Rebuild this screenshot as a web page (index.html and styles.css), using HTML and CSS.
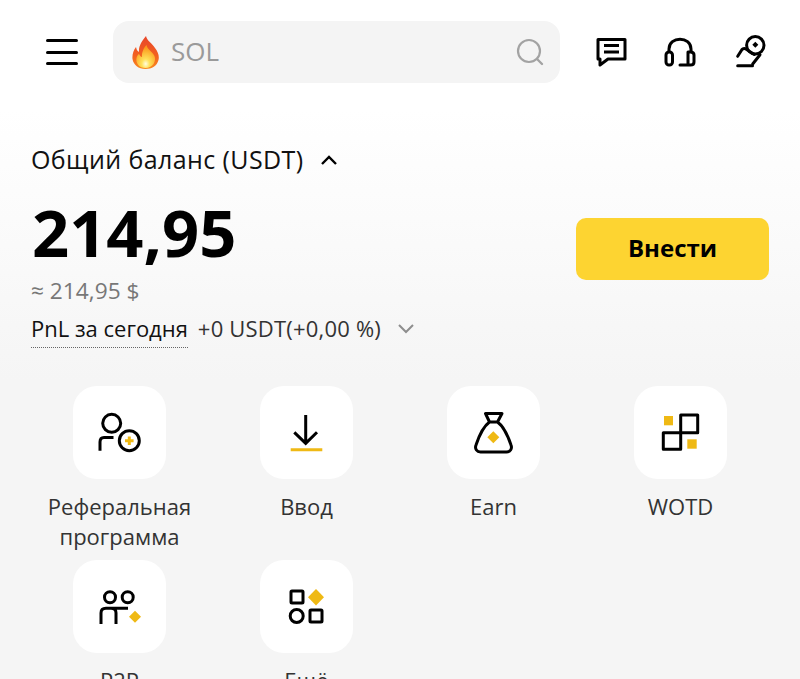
FILE: index.html
```html
<!DOCTYPE html>
<html lang="en">
<head>
    <meta charset="UTF-8">
    <meta name="viewport" content="width=device-width, initial-scale=1.0">
    <title>Balance</title>
    <link rel="stylesheet" href="styles.css">
</head>
<body>
    <header class="top-bar">
        <button class="menu-button" aria-label="Menu">
            <span></span><span></span><span></span>
        </button>
        <div class="search-box">
            <svg class="flame" viewBox="0 0 27 33" width="27" height="33">
                <defs>
                    <linearGradient id="flame-outer" x1="0" y1="0" x2="0" y2="1">
                        <stop offset="0" stop-color="#e8452a"/>
                        <stop offset="0.6" stop-color="#f2611f"/>
                        <stop offset="1" stop-color="#f98a1e"/>
                    </linearGradient>
                    <radialGradient id="flame-inner" cx="0.5" cy="0.82" r="0.7">
                        <stop offset="0" stop-color="#fffde0"/>
                        <stop offset="0.3" stop-color="#ffe15a"/>
                        <stop offset="1" stop-color="#fb9a1c"/>
                    </radialGradient>
                </defs>
                <path fill="url(#flame-outer)" d="M14 0 C15 5 20 7 23 12 C26 16 27.500 20 26.500 24 C25 30 20 33 13.500 33 C6.500 33 1.500 29 .5 23 C0 19 1.500 14 4 11 C4.500 13 5 15 7 16 C6.500 10 10 5 14 0Z"/>
                <path fill="url(#flame-inner)" d="M14.500 9 C15 13 20 15 22.500 20 C24.500 25 21 32 13.500 32 C7 32 3.500 27 4.500 22 C5 20 6 18.500 7 18 C8 20 9 21 10 21 C9.500 17 11.500 12 14.500 9Z"/>
            </svg>
            <span class="search-text">SOL</span>
            <svg class="search-icon" viewBox="0 0 28 28" width="28" height="28">
                <circle cx="13" cy="13" r="11" fill="none" stroke="#a3a3a3" stroke-width="2.200"/>
                <path d="M21 21 L26 26" fill="none" stroke="#a3a3a3" stroke-width="2.400" stroke-linecap="round"/>
            </svg>
        </div>
        <div class="top-icons">
            <svg class="top-icon" viewBox="0 0 32 32" width="32" height="32">
                <path d="M3 3.500 H30 V23 H13 L5 29 V23 H3Z" class="line" stroke-linejoin="round"/>
                <path d="M9 9.500 H24 M9 16 H24" class="line"/>
            </svg>
            <svg class="top-icon" viewBox="0 0 34 32" width="34" height="32">
                <path d="M6 16 V13 C6 0 28 0 28 13 V16" class="line"/>
                <rect x="3" y="16" width="6.500" height="13" rx="3" class="line"/>
                <path d="M25 16 H27.500 Q31 16 31 19 V26 Q31 29 27.500 29 H17 M25 16 V29" class="line" stroke-linecap="round"/>
            </svg>
            <svg class="top-icon" viewBox="0 0 36 36" width="36" height="36">
                <circle cx="22.300" cy="11.300" r="8.700" class="line"/>
                <path d="M4.700 22.300 L9 15.500 Q10 14.200 12.500 14.700 L21.300 20.500" class="line" stroke-linecap="round" stroke-linejoin="round"/>
                <path d="M27 20.700 L19.700 30" class="line" stroke-linecap="round"/>
                <path d="M4.700 31.700 H19.500" class="line" stroke-linecap="round"/>
                <path d="M22.300 7.700 L25.300 10.700 L22.300 13.700 L19.300 10.700Z" fill="#000"/>
            </svg>
        </div>
    </header>

    <main>
        <section class="balance">
            <div class="balance-title">
                <span>Общий баланс (USDT)</span>
                <svg viewBox="0 0 18 12" width="18" height="12">
                    <path d="M2 10 L9 3 L16 10" fill="none" stroke="#000" stroke-width="2.400"/>
                </svg>
            </div>
            <div class="balance-row">
                <div>
                    <div class="amount">214,95</div>
                    <div class="amount-usd">≈ 214,95 $</div>
                </div>
                <button class="deposit-button">Внести</button>
            </div>
            <div class="pnl">
                <span class="pnl-label">PnL за сегодня</span>
                <span class="pnl-value">+0 USDT(+0,00 %)</span>
                <svg viewBox="0 0 18 12" width="18" height="12">
                    <path d="M2 2 L9 9 L16 2" fill="none" stroke="#8e8e8e" stroke-width="2"/>
                </svg>
            </div>
        </section>

        <section class="shortcuts">
            <div class="shortcut">
                <div class="tile">
                    <svg viewBox="0 0 93 93">
                        <circle cx="38.700" cy="37.300" r="9" class="line"/>
                        <path d="M27 64.700 V56 Q27 51.500 31 51.500 H40.500" class="line"/>
                        <circle cx="56.300" cy="54.700" r="10" class="line"/>
                        <path d="M52 54.700 H60.600 M56.300 50.400 V59" class="accent-line"/>
                    </svg>
                </div>
                <div class="shortcut-label">Реферальная программа</div>
            </div>
            <div class="shortcut">
                <div class="tile">
                    <svg viewBox="0 0 93 93">
                        <path d="M45.700 29 V57 M34.300 46.300 L45.700 57.300 L57 46.300" class="line"/>
                        <path d="M30.700 63.700 H62.300" class="accent-line"/>
                    </svg>
                </div>
                <div class="shortcut-label">Ввод</div>
            </div>
            <div class="shortcut">
                <div class="tile">
                    <svg viewBox="0 0 93 93">
                        <path d="M38.500 27.500 H55 L50.500 36 C56 40 61 50 64 59 C65.500 63 63 66 59.500 66 H33.500 C30 66 27.500 63 29 59 C32 50 37 40 42.500 36Z M42.500 36 H50.500" class="line" stroke-linejoin="round"/>
                        <path d="M46.300 45.300 L52.300 51.300 L46.300 57.300 L40.300 51.300Z" class="accent"/>
                    </svg>
                </div>
                <div class="shortcut-label">Earn</div>
            </div>
            <div class="shortcut">
                <div class="tile">
                    <svg viewBox="0 0 93 93">
                        <path d="M46.700 46.700 V29 H63.700 V46.700Z M29.300 46.700 H46.700 V63.300 H29.300Z" class="line" stroke-linejoin="round"/>
                        <rect x="30" y="30" width="9" height="9.300" class="accent"/>
                        <rect x="53.300" y="53.300" width="9.400" height="9.400" class="accent"/>
                    </svg>
                </div>
                <div class="shortcut-label">WOTD</div>
            </div>
            <div class="shortcut">
                <div class="tile">
                    <svg viewBox="0 0 93 93">
                        <circle cx="37" cy="37.300" r="5.500" class="line"/>
                        <circle cx="54.700" cy="37.300" r="5.500" class="line"/>
                        <path d="M28 64 V53 Q28 48.300 33 48.300 H55 M43 64 V53 Q43 48.300 38 48.300" class="line"/>
                        <path d="M62 50.700 L68 56.700 L62 62.700 L56 56.700Z" class="accent"/>
                    </svg>
                </div>
                <div class="shortcut-label">P2P</div>
            </div>
            <div class="shortcut">
                <div class="tile">
                    <svg viewBox="0 0 93 93">
                        <rect x="31" y="31" width="12" height="12" rx="1" class="line"/>
                        <path d="M56 29 L64 37.300 L56 45.600 L48 37.300Z" class="accent"/>
                        <circle cx="36.700" cy="56" r="6.500" class="line"/>
                        <rect x="50" y="50" width="12" height="12" rx="1" class="line"/>
                    </svg>
                </div>
                <div class="shortcut-label">Ещё</div>
            </div>
        </section>
    </main>
</body>
</html>
```

FILE: styles.css
```css
/* General Styles */
html,
body {
    height: 679px;
}

body {
    margin: 0;
    overflow: hidden;
    font-family: 'Open Sans', sans-serif;
    color: #111111;
    background: linear-gradient(#ffffff 110px, #f5f5f5 380px);
}

.line {
    fill: none;
    stroke: #000000;
    stroke-width: 3;
}

.accent {
    fill: #efb914;
}

.accent-line {
    fill: none;
    stroke: #efb914;
    stroke-width: 3;
}

/* Top Bar */
.top-bar {
    display: flex;
    align-items: center;
    padding: 21px 0 0 46px;
}

.menu-button {
    display: flex;
    flex-direction: column;
    gap: 8.500px;
    width: 32px;
    padding: 0;
    margin-right: 35px;
    border: none;
    background: none;
}

.menu-button span {
    display: block;
    height: 3px;
    border-radius: 2px;
    background-color: #000000;
}

.search-box {
    display: flex;
    flex-shrink: 0;
    align-items: center;
    width: 447px;
    height: 62px;
    padding: 0 16px 0 19px;
    box-sizing: border-box;
    border-radius: 16px;
    background-color: #f4f4f4;
}

.search-text {
    flex: 1;
    margin-left: 12px;
    padding-bottom: 2px;
    font-size: 26px;
    color: #9a9a9a;
}

.top-icons {
    display: flex;
    align-items: center;
    gap: 36px;
    margin-left: 35px;
}

/* Balance */
.balance {
    padding: 62px 31px 0;
}

.balance-title {
    display: flex;
    align-items: center;
    gap: 17px;
    height: 30px;
    font-size: 25px;
    letter-spacing: 0.4px;
}

.balance-title span {
    padding-bottom: 2px;
}

.balance-row {
    display: flex;
    justify-content: space-between;
    align-items: flex-start;
    margin-top: 22px;
}

.amount {
    margin-left: 1px;
    font-size: 65px;
    line-height: 70px;
    font-weight: 700;
    color: #000000;
}

.amount-usd {
    margin-top: 9px;
    font-size: 22.700px;
    line-height: 30px;
    color: #777777;
}

.deposit-button {
    width: 193px;
    height: 62px;
    padding-bottom: 4px;
    margin-top: 21px;
    border: none;
    border-radius: 10px;
    background-color: #fdd431;
    font-family: inherit;
    font-size: 24px;
    font-weight: 700;
    color: #000000;
}

.pnl {
    display: flex;
    align-items: center;
    margin-top: 8px;
    font-size: 22px;
    line-height: 29px;
}

.pnl-label {
    padding-bottom: 4px;
    margin-bottom: -5px;
    border-bottom: 1px dotted #666666;
}

.pnl-value {
    margin-left: 10px;
    margin-right: 16px;
    letter-spacing: 0.2px;
    color: #333333;
}

/* Shortcuts */
.shortcuts {
    display: grid;
    grid-template-columns: repeat(4, 1fr);
    row-gap: 8px;
    padding: 43px 26px 0;
}

.shortcut {
    display: flex;
    flex-direction: column;
    align-items: center;
}

.tile {
    width: 93px;
    height: 93px;
    border-radius: 24px;
    background-color: #ffffff;
}

.tile svg {
    display: block;
    width: 93px;
    height: 93px;
}

.shortcut-label {
    margin-top: 12px;
    margin-bottom: 1px;
    width: 160px;
    font-size: 22px;
    line-height: 30px;
    text-align: center;
    color: #333333;
}
```
